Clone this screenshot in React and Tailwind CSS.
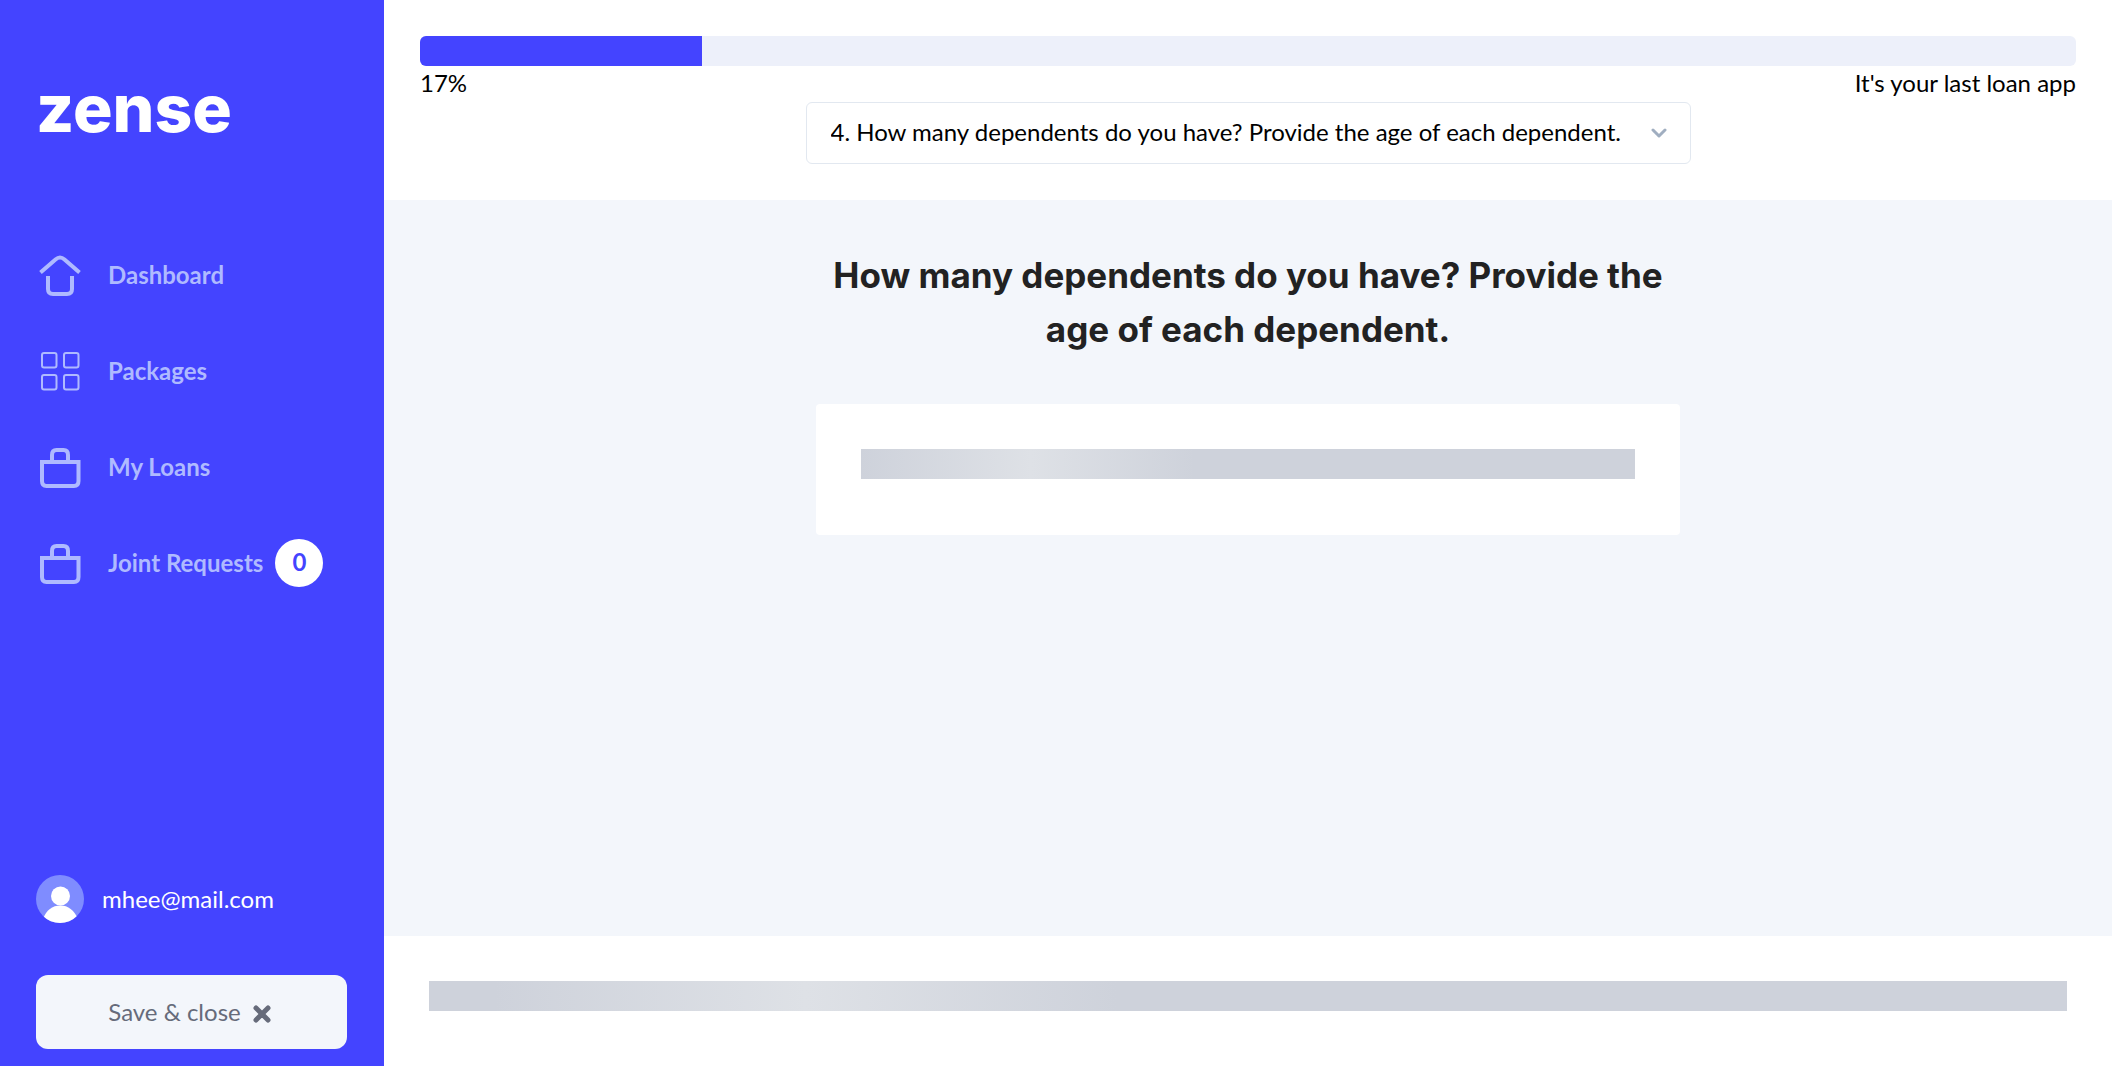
const HomeIcon = () => (
  <svg viewBox="0 0 48 48" className="size-12 shrink-0" fill="none" stroke="currentColor" strokeWidth="4" aria-hidden="true">
    <path d="M4.500 21.500 L19.500 8.500 Q24 4.500 28.500 8.500 L43.500 21.500" />
    <path d="M12 25 V38 Q12 43 17 43 H31 Q36 43 36 38 V25" />
  </svg>
);

const GridIcon = () => (
  <svg viewBox="0 0 48 48" className="size-12 shrink-0" fill="none" stroke="currentColor" strokeWidth="2" aria-hidden="true">
    <rect x="6" y="6" width="14.500" height="14.500" rx="2" />
    <rect x="28" y="6" width="14.500" height="14.500" rx="2" />
    <rect x="6" y="28" width="14.500" height="14.500" rx="2" />
    <rect x="28" y="28" width="14.500" height="14.500" rx="2" />
  </svg>
);

const BagIcon = () => (
  <svg viewBox="0 0 48 48" className="size-12 shrink-0" fill="none" stroke="currentColor" strokeWidth="4" aria-hidden="true">
    <path d="M6 19 H42.500 V38 Q42.500 43 38 43 H10.500 Q6 43 6 38 Z" />
    <path d="M16 19 V12 Q16 7 20.500 7 H27.500 Q32 7 32 12 V19" />
  </svg>
);

const Avatar = () => (
  <svg viewBox="0 0 48 48" className="size-12 shrink-0" aria-hidden="true">
    <defs>
      <clipPath id="avatar-clip">
        <circle cx="24" cy="24" r="24" />
      </clipPath>
    </defs>
    <g clipPath="url(#avatar-clip)">
      <rect width="48" height="48" fill="#7f8cff" />
      <circle cx="24.500" cy="21" r="9.500" fill="#fff" />
      <path d="M7 44 Q12 30.500 24.500 30.500 Q36 30.500 42 44 V48 H7 Z" fill="#fff" />
    </g>
  </svg>
);

const navItems = [
  { label: "Dashboard", Icon: HomeIcon },
  { label: "Packages", Icon: GridIcon },
  { label: "My Loans", Icon: BagIcon },
  { label: "Joint Requests", Icon: BagIcon, badge: 0 },
];

function Sidebar() {
  return (
    <aside className="flex w-96 shrink-0 flex-col bg-[#4444ff] pt-18 pr-[37px] pb-[17px] pl-9">
      <a href="#" className="self-start font-[Inter,sans-serif] text-[66px] leading-[72px] font-extrabold text-white">
        zense
      </a>
      <nav className="mt-[107px] flex flex-col gap-12">
        {navItems.map(({ label, Icon, badge }) => (
          <a key={label} href="#" className="flex h-12 items-center font-bold text-[#afbaff]">
            <Icon />
            <span className="ml-6">{label}</span>
            {badge !== undefined && (
              <span className="ml-3 flex size-12 items-center justify-center rounded-full bg-white pb-0.5 text-[#4444ff]">
                {badge}
              </span>
            )}
          </a>
        ))}
      </nav>
      <div className="mt-auto flex items-center gap-[18px] text-white">
        <Avatar />
        <span>mhee@mail.com</span>
      </div>
      <button
        type="button"
        className="mt-[52px] flex h-[74px] items-center justify-center gap-3 rounded-xl bg-[#f3f6fb] pr-1 text-[#666b7a]"
      >
        Save &amp; close
        <svg viewBox="0 0 18 18" className="mt-1 size-[18px]" stroke="currentColor" strokeWidth="5" strokeLinecap="round" aria-hidden="true">
          <path d="M3 3 L15 15 M15 3 L3 15" />
        </svg>
      </button>
    </aside>
  );
}

function Header() {
  return (
    <header className="flex flex-col bg-white p-9">
      <div className="h-[30px] overflow-hidden rounded-md bg-[#edf0fa]" role="progressbar" aria-label="Application progress" aria-valuenow={17}>
        <div className="h-full w-[17%] bg-[#4444ff]" />
      </div>
      <div className="flex h-9 items-center justify-between pb-0.5">
        <span>17%</span>
        <span>It's your last loan app</span>
      </div>
      <div className="relative self-center">
        <select
          aria-label="Question"
          className="h-[62px] appearance-none rounded-md border border-[#e2e8f0] bg-white pr-[66px] pb-0.5 pl-6 text-black"
        >
          <option>4. How many dependents do you have? Provide the age of each dependent.</option>
        </select>
        <svg
          viewBox="0 0 16 10"
          className="pointer-events-none absolute top-[26px] right-6 h-[10px] w-4"
          fill="none"
          stroke="#a0aec0"
          strokeWidth="3"
          strokeLinecap="round"
          strokeLinejoin="round"
          aria-hidden="true"
        >
          <path d="M2 2 L8 8 L14 2" />
        </svg>
      </div>
    </header>
  );
}

export default function App() {
  return (
    <div className="flex min-h-screen font-[Lato,sans-serif] text-2xl leading-9 text-black">
      <Sidebar />
      <div className="flex min-w-0 flex-1 flex-col">
        <Header />
        <main className="flex flex-1 flex-col items-center bg-[#f3f6fb] px-9 pt-12">
          <h1 className="max-w-[864px] text-center font-[Inter,sans-serif] text-[35px] leading-[54px] font-bold text-[#222]">
            How many dependents do you have? Provide the age of each dependent.
          </h1>
          <section className="mt-12 w-full max-w-[864px] rounded bg-white px-[45px] pt-[45px] pb-14" aria-label="Loading answer">
            <div className="h-[30px] bg-[linear-gradient(90deg,#ced2db_0%,#dee1e6_22%,#ced2db_43%)]" />
          </section>
        </main>
        <footer className="bg-white px-[45px] pt-[45px] pb-[55px]">
          <div className="h-[30px] bg-[linear-gradient(90deg,#ced2db_4%,#dee1e6_23%,#ced2db_42%)]" />
        </footer>
      </div>
    </div>
  );
}
